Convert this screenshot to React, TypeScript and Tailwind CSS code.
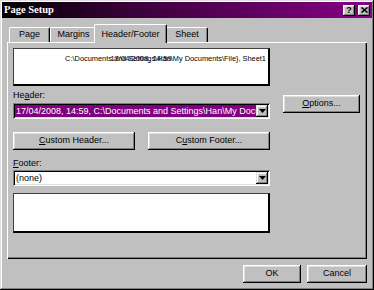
import React from "react";

const raised =
  "shadow-[inset_-1px_-1px_#000,inset_1px_1px_#fff,inset_-2px_-2px_#808080,inset_2px_2px_#dfdfdf]";

const PATH = "C:\\Documents and Settings\\Han\\My Documents\\File}, Sheet1";

function Btn({ children, w }: { children: React.ReactNode; w: string }) {
  return (
    <div
      className={`${w} h-[18px] flex items-center justify-center bg-[#c0c0c0] text-black text-[9px] shadow-[inset_-1px_-1px_#000,inset_1px_1px_#fff,inset_-2px_-2px_#808080,inset_2px_2px_#dfdfdf]`}
    >
      {children}
    </div>
  );
}

function Arrow() {
  return (
    <div className="w-[12px] h-full flex items-center justify-center bg-[#c0c0c0] shadow-[inset_-1px_-1px_#000,inset_1px_1px_#dfdfdf,inset_-2px_-2px_#808080,inset_2px_2px_#fff]">
      <svg width="7" height="4" viewBox="0 0 7 4">
        <path d="M0 0h7L3.5 4z" fill="#000" />
      </svg>
    </div>
  );
}

export default function App() {
  return (
    <div className="w-[374px] h-[290px] bg-[#c0c0c0] p-[2px] flex flex-col font-['Liberation_Sans',Arial,sans-serif] text-black shadow-[inset_-1px_-1px_#000,inset_1px_1px_#dfdfdf,inset_-2px_-2px_#808080,inset_2px_2px_#fff]">
      {/* Title bar */}
      <div className="h-[16px] flex items-center justify-between pl-[2px] pr-[2px] bg-[linear-gradient(to_right,#000000,#3a003a_35%,#860086)]">
        <span className="text-white font-bold text-[10.5px] leading-none font-['Liberation_Serif',serif]">
          Page Setup
        </span>
        <div className="flex items-center gap-[3px]">
          <div className={`w-[12px] h-[11px] bg-[#c0c0c0] flex items-center justify-center text-[9px] font-bold leading-none ${raised}`}>
            ?
          </div>
          <div className={`w-[12px] h-[11px] bg-[#c0c0c0] flex items-center justify-center ${raised}`}>
            <svg width="7" height="6" viewBox="0 0 7 6">
              <path d="M0.5 0.5L6.5 5.5M6.5 0.5L0.5 5.5" stroke="#000" strokeWidth="1.6" />
            </svg>
          </div>
        </div>
      </div>

      <div className="px-[5px] flex flex-col">
        {/* Tabs */}
        <div className="h-[24px] flex items-end pl-[2px] text-[9px]">
          <div className="w-[41px] h-[15px] flex items-center justify-center border-t border-l border-white border-r border-r-black rounded-t-[2px] shadow-[inset_-1px_0_#808080]">
            Page
          </div>
          <div className="w-[46px] h-[15px] flex items-center justify-center border-t border-l border-white rounded-t-[2px]">
            Margins
          </div>
          <div className="relative z-10 -mx-[2px] mb-[-1px] w-[73px] h-[19px] flex items-start pt-[3px] justify-center bg-[#c0c0c0] border-t border-l border-white border-r border-r-black rounded-t-[2px] shadow-[inset_-1px_0_#808080]">
            Header/Footer
          </div>
          <div className="w-[43px] h-[15px] flex items-center justify-center border-t border-white border-r border-r-black rounded-t-[2px] shadow-[inset_-1px_0_#808080] pl-[2px]">
            Sheet
          </div>
        </div>

        {/* Panel */}
        <div className="h-[217px] flex pt-[6px] pl-[6px] shadow-[inset_1px_1px_#fff,inset_-1px_-1px_#000,inset_-2px_-2px_#808080]">
          <div className="w-[257px] flex flex-col text-[9px]">
            <div className="relative h-[38px] bg-white border-t border-l border-[#404040] border-b-2 border-r-2 border-b-black border-r-black pt-[5px] pr-[2px] flex justify-end">
              <span className="text-[7.4px] leading-[10px] whitespace-nowrap">{PATH}</span>
              <span className="absolute left-0 right-0 top-[5px] text-center text-[7.6px] leading-[10px] whitespace-nowrap">
                17/04/2008, 14:59
              </span>
            </div>
            <div className="mt-[3px] h-[13px] leading-[13px]">
              He<span className="underline">a</span>der:
            </div>
            <div className="mt-[1px] h-[16px] bg-white p-[2px] flex shadow-[inset_1px_1px_#808080,inset_-1px_-1px_#fff,inset_2px_2px_#000,inset_-2px_-2px_#dfdfdf]">
              <div className="flex-1 min-w-0 bg-[#800080] text-white leading-[12px] whitespace-nowrap overflow-hidden pl-[1px]">
                {"17/04/2008, 14:59, " + PATH}
              </div>
              <Arrow />
            </div>
            <div className="mt-[13px] flex justify-between">
              <Btn w="w-[122px]">
                <span>
                  <span className="underline">C</span>ustom Header...
                </span>
              </Btn>
              <Btn w="w-[122px]">
                <span>
                  C<span className="underline">u</span>stom Footer...
                </span>
              </Btn>
            </div>
            <div className="mt-[7px] h-[13px] leading-[13px]">
              <span className="underline">F</span>ooter:
            </div>
            <div className="h-[16px] bg-white p-[2px] flex shadow-[inset_1px_1px_#808080,inset_-1px_-1px_#fff,inset_2px_2px_#000,inset_-2px_-2px_#dfdfdf]">
              <div className="flex-1 min-w-0 leading-[12px] whitespace-nowrap overflow-hidden pl-[1px]">
                (none)
              </div>
              <Arrow />
            </div>
            <div className="mt-[7px] h-[40px] bg-white border-t border-l border-[#404040] border-b-2 border-r-2 border-b-black border-r-black" />
          </div>
          <div className="ml-[13px] mt-[47px]">
            <Btn w="w-[77px]">
              <span>
                <span className="underline">O</span>ptions...
              </span>
            </Btn>
          </div>
        </div>

        {/* Bottom buttons */}
        <div className="mt-[6px] flex justify-end gap-[6px]">
          <Btn w="w-[58px]">OK</Btn>
          <Btn w="w-[60px]">Cancel</Btn>
        </div>
      </div>
    </div>
  );
}
